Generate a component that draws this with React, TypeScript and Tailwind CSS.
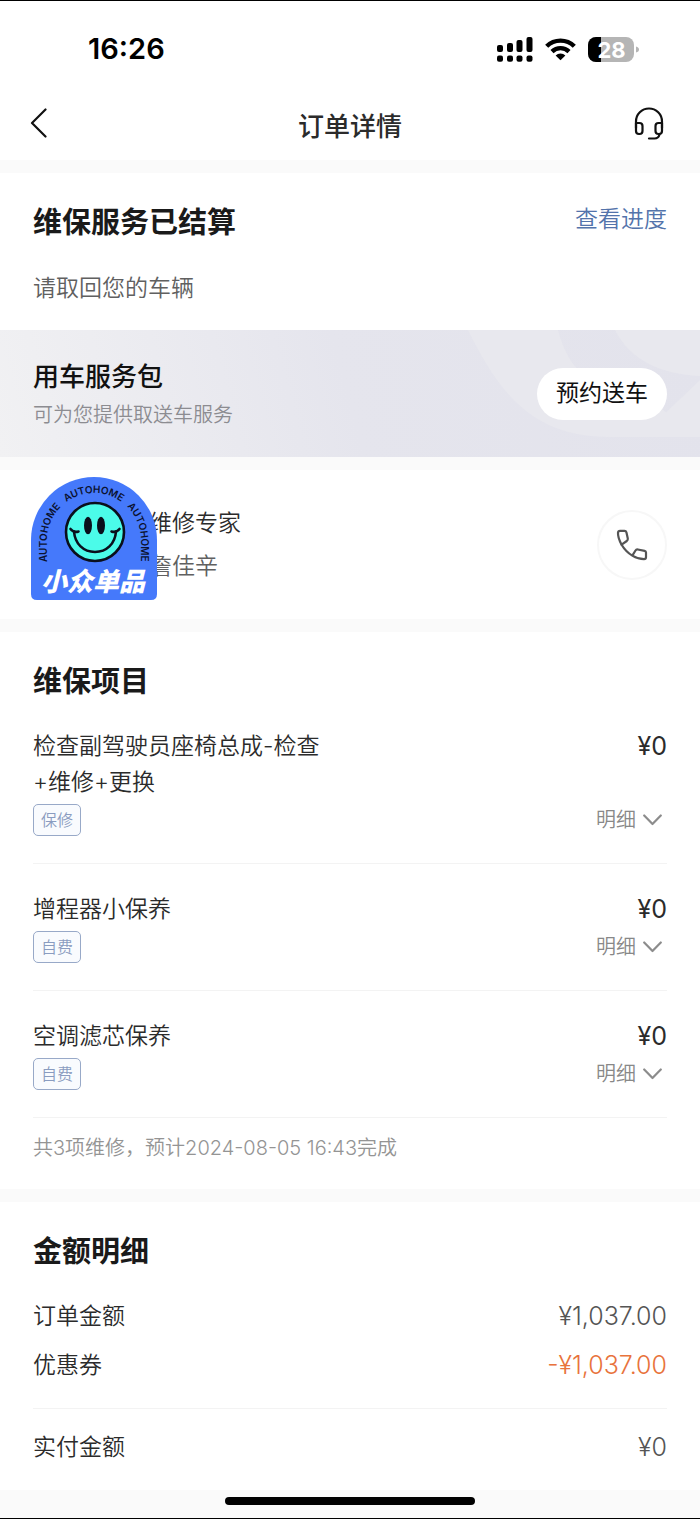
import React from 'react';

interface ServiceItem {
  name: string;
  tag: string;
  price: string;
}

const items: ServiceItem[] = [
  { name: '检查副驾驶员座椅总成-检查+维修+更换', tag: '保修', price: '¥0' },
  { name: '增程器小保养', tag: '自费', price: '¥0' },
  { name: '空调滤芯保养', tag: '自费', price: '¥0' },
];

const StatusBar: React.FC = () => (
  <div className="flex items-center justify-between pt-7 pl-[88px] pr-[61px]">
    <span className="text-[29px] leading-10 font-semibold text-black">16:26</span>
    <div className="flex items-center gap-3">
      <svg width="36" height="25" viewBox="0 0 36 25" aria-hidden="true">
        <rect x="0" y="8" width="6" height="7" rx="2" />
        <rect x="10" y="6" width="6" height="9" rx="2" />
        <rect x="19.5" y="3" width="6" height="12" rx="2" />
        <rect x="29.5" y="0" width="6" height="15" rx="2" />
        <rect x="0" y="18.5" width="6" height="6.2" rx="2" />
        <rect x="10" y="18.5" width="6" height="6.2" rx="2" />
        <rect x="19.5" y="18.5" width="6" height="6.2" rx="2" />
        <rect x="29.5" y="18.5" width="6" height="6.2" rx="2" />
      </svg>
      <svg width="31" height="24" viewBox="0 0 31 24" aria-hidden="true">
        <g fill="none" stroke="#000" strokeWidth="4.4">
          <path d="M1.7 9.3A19.6 19.6 0 0 1 29.3 9.3" />
          <path d="M7 14.6A12.2 12.2 0 0 1 24 14.6" />
        </g>
        <path d="M15.5 23.2L10.6 18.4A7 7 0 0 1 20.4 18.4Z" />
      </svg>
      <svg width="51" height="25" viewBox="0 0 51 25" role="img" aria-label="28%">
        <defs>
          <clipPath id="battery">
            <rect width="46" height="25" rx="8" />
          </clipPath>
        </defs>
        <g clipPath="url(#battery)">
          <rect width="46" height="25" fill="#b5b5b5" />
          <rect width="13" height="25" fill="#000" />
        </g>
        <path d="M48 9.5C50 10 51 11 51 12.5S50 15 48 15.5Z" fill="#b5b5b5" />
        <text x="23.5" y="20.5" textAnchor="middle" fontSize="22" fontWeight="700" fill="#fff">28</text>
      </svg>
    </div>
  </div>
);

const Sticker: React.FC = () => (
  <svg className="absolute left-[31px] top-[7px]" width="126" height="123" viewBox="0 0 126 123" role="img" aria-label="小众单品">
    <defs>
      <path id="arch" d="M16 86V63A47 47 0 0 1 110 63V86" />
    </defs>
    <path d="M0 63A63 63 0 0 1 126 63V117Q126 123 120 123H6Q0 123 0 117Z" fill="#4579fb" />
    <g fontSize="10" fontWeight="600" fill="#0b1230">
      <text><textPath href="#arch" startOffset="1">AUTOHOME</textPath></text>
      <text><textPath href="#arch" startOffset="67">AUTOHOME</textPath></text>
      <text><textPath href="#arch" startOffset="133">AUTOHOME</textPath></text>
    </g>
    <circle cx="64" cy="55" r="29" fill="#4bfbe9" stroke="#0a0f1c" strokeWidth="2.6" />
    <ellipse cx="57" cy="48.5" rx="4" ry="8.7" fill="#0a0f1c" />
    <ellipse cx="70" cy="48.5" rx="4" ry="8.7" fill="#0a0f1c" />
    <g fill="none" stroke="#0a0f1c" strokeWidth="2.6" strokeLinecap="round">
      <path d="M43 54.5C44 67 52.5 75 64 75S84 67 85 54.5" />
      <path d="M39.5 52C41.5 54.5 44.5 55.5 47.5 54.5" />
      <path d="M88.5 52C86.5 54.5 83.5 55.5 80.5 54.5" />
    </g>
    <text x="62" y="114" textAnchor="middle" fontSize="26" fontWeight="900" fontStyle="italic" fill="#fff">小众单品</text>
  </svg>
);

const Divider: React.FC = () => <div className="h-[13px] bg-[#fafafa]" />;

const ItemRow: React.FC<{ item: ServiceItem }> = ({ item }) => (
  <li className="flex flex-col gap-1 border-b border-[#f3f3f3] py-[27px] first:pt-6">
    <div className="flex items-start justify-between text-[#2b2b2b]">
      <p className="max-w-[290px] text-[23px] leading-9">{item.name}</p>
      <span className="text-[25px] leading-9 font-normal">{item.price}</span>
    </div>
    <div className="flex items-center justify-between">
      <span className="rounded-[5px] border border-[#98a9c8] bg-[#f9fbfe] px-[7px] text-base leading-[30px] text-[#8a9cc0]">
        {item.tag}
      </span>
      <button type="button" className="flex items-center gap-[7px] pr-[5px] text-xl leading-8 text-[#888]">
        明细
        <svg width="19" height="12" viewBox="0 0 19 12" fill="none" stroke="#8c8c8c" strokeWidth="2.2" strokeLinecap="round" strokeLinejoin="round" aria-hidden="true">
          <path d="M1.2 1.5L9.5 10L17.8 1.5" />
        </svg>
      </button>
    </div>
  </li>
);

const App: React.FC = () => {
  return (
    <div className="min-h-screen w-full border-y border-black bg-white font-[Inter,'Noto_Sans_CJK_SC',sans-serif] font-[350]">
      <StatusBar />

      <header className="flex items-end justify-between pt-8 pr-9 pb-[15px] pl-[30px]">
        <button type="button" aria-label="返回" className="flex h-11 w-9 items-center">
          <svg width="17" height="30" viewBox="0 0 17 30" fill="none" stroke="#111" strokeWidth="2.2" strokeLinecap="round" strokeLinejoin="round">
            <path d="M15.5 1.5L2 15L15.5 28.5" />
          </svg>
        </button>
        <h1 className="text-[26px] leading-9 font-medium text-[#2b2b2b]">订单详情</h1>
        <button type="button" aria-label="客服" className="flex h-11 w-[30px] items-center justify-end">
          <svg width="30" height="33" viewBox="0 0 30 33" fill="none" stroke="#111" strokeWidth="2.2" strokeLinecap="round" strokeLinejoin="round">
            <path d="M2 21V14.5A13 13 0 0 1 28 14.5V21" />
            <path d="M2 16H5.5Q8.5 16 8.5 19V24Q8.5 27 5.5 27H5Q2 27 2 24Z" />
            <path d="M28 16H24.5Q21.5 16 21.5 19V24Q21.5 27 24.5 27H25Q28 27 28 24Z" />
            <path d="M25.5 27.5Q24.5 31.5 20.5 31.5H15" />
          </svg>
        </button>
      </header>

      <Divider />

      <section className="px-[33px] pt-7 pb-[26px]">
        <div className="flex items-start justify-between">
          <h2 className="text-[29px] leading-11 font-bold text-[#1a1a1a]">维保服务已结算</h2>
          <a href="#progress" className="text-[23px] leading-9 text-[#5373ab]">查看进度</a>
        </div>
        <p className="mt-[27px] text-[23px] leading-8 text-[#606060]">请取回您的车辆</p>
      </section>

      <section className="relative h-[127px] overflow-hidden bg-linear-75 from-[#f1f1f3] via-[#e5e5ed] to-[#e3e3ec]">
        <svg className="absolute top-0 right-0" width="240" height="127" viewBox="0 0 240 127" aria-hidden="true">
          <path d="M8 0H98C108 42 140 70 195 74L240 107H150C70 107 38 60 8 0Z" fill="#e8e8ee" />
          <path d="M155 0H240V46C200 44 170 30 155 0Z" fill="#e8e8ee" />
          <path d="M200 88L240 50V107H225Z" fill="#e8e8ee" />
        </svg>
        <div className="relative flex h-full items-center justify-between px-[33px]">
          <div className="flex flex-col gap-[6px]">
            <h2 className="text-[26px] leading-9 font-medium text-[#111]">用车服务包</h2>
            <p className="text-xl leading-7 text-[#8c8c91]">可为您提供取送车服务</p>
          </div>
          <button type="button" className="h-[52px] rounded-full bg-white px-[19px] text-[23px] font-normal text-[#111]">
            预约送车
          </button>
        </div>
      </section>

      <Divider />

      <section className="relative flex items-center justify-between py-[37px] pl-[149px] pr-[33px]">
        <div className="flex flex-col gap-[11px] text-[23px] leading-8">
          <p className="text-[#2b2b2b]">维修专家</p>
          <p className="text-[#606060]">詹佳辛</p>
        </div>
        <Sticker />
        <button type="button" aria-label="拨打电话" className="flex h-[70px] w-[70px] items-center justify-center rounded-full border-2 border-[#f7f7f7]">
          <svg width="32" height="32" viewBox="0 0 32 32" fill="none" stroke="#555" strokeWidth="2.2" strokeLinecap="round" strokeLinejoin="round">
            <path d="M4 1.8H8.5Q10 1.8 10.4 3.2L11.8 9.5Q12 11 10.8 12L5.6 15.7C3 11 1.8 7.5 2 3.8Q2.1 1.8 4 1.8Z" />
            <path d="M5.6 15.7C8.5 20.5 12 24 16.3 26.6L19.5 21.5Q20.3 20.2 21.8 20.5L28.6 21.9Q30 22.2 30 23.6V28.3Q30 30.2 28 30.2C23.5 30.2 20 28.8 16.3 26.6" />
          </svg>
        </button>
      </section>

      <Divider />

      <section className="px-[33px] pt-7 pb-[27px]">
        <h2 className="text-[29px] leading-11 font-bold text-[#1a1a1a]">维保项目</h2>
        <ul>
          {items.map((item) => (
            <ItemRow key={item.name} item={item} />
          ))}
        </ul>
        <p className="pt-4 text-xl leading-7 text-[#949494]">共3项维修，预计2024-08-05 16:43完成</p>
      </section>

      <Divider />

      <section className="px-[33px] pt-7 pb-[25px]">
        <h2 className="text-[29px] leading-11 font-bold text-[#1a1a1a]">金额明细</h2>
        <dl className="text-[#2b2b2b]">
          <div className="mt-6 flex justify-between leading-9">
            <dt className="text-[23px]">订单金额</dt>
            <dd className="text-[25px] text-[#555]">¥1,037.00</dd>
          </div>
          <div className="mt-[13px] flex justify-between leading-9">
            <dt className="text-[23px]">优惠券</dt>
            <dd className="text-[25px] text-[#e8733c]">-¥1,037.00</dd>
          </div>
          <div className="mt-[25px] flex justify-between border-t border-[#f3f3f3] pt-5 leading-9">
            <dt className="text-[23px]">实付金额</dt>
            <dd className="text-[25px] text-[#555]">¥0</dd>
          </div>
        </dl>
      </section>

      {/* Home indicator */}
      <footer className="flex justify-center bg-[#fafafa] pt-[7px] pb-[13px]">
        <div className="h-2 w-[250px] rounded-full bg-black" />
      </footer>
    </div>
  );
};

export default App;
